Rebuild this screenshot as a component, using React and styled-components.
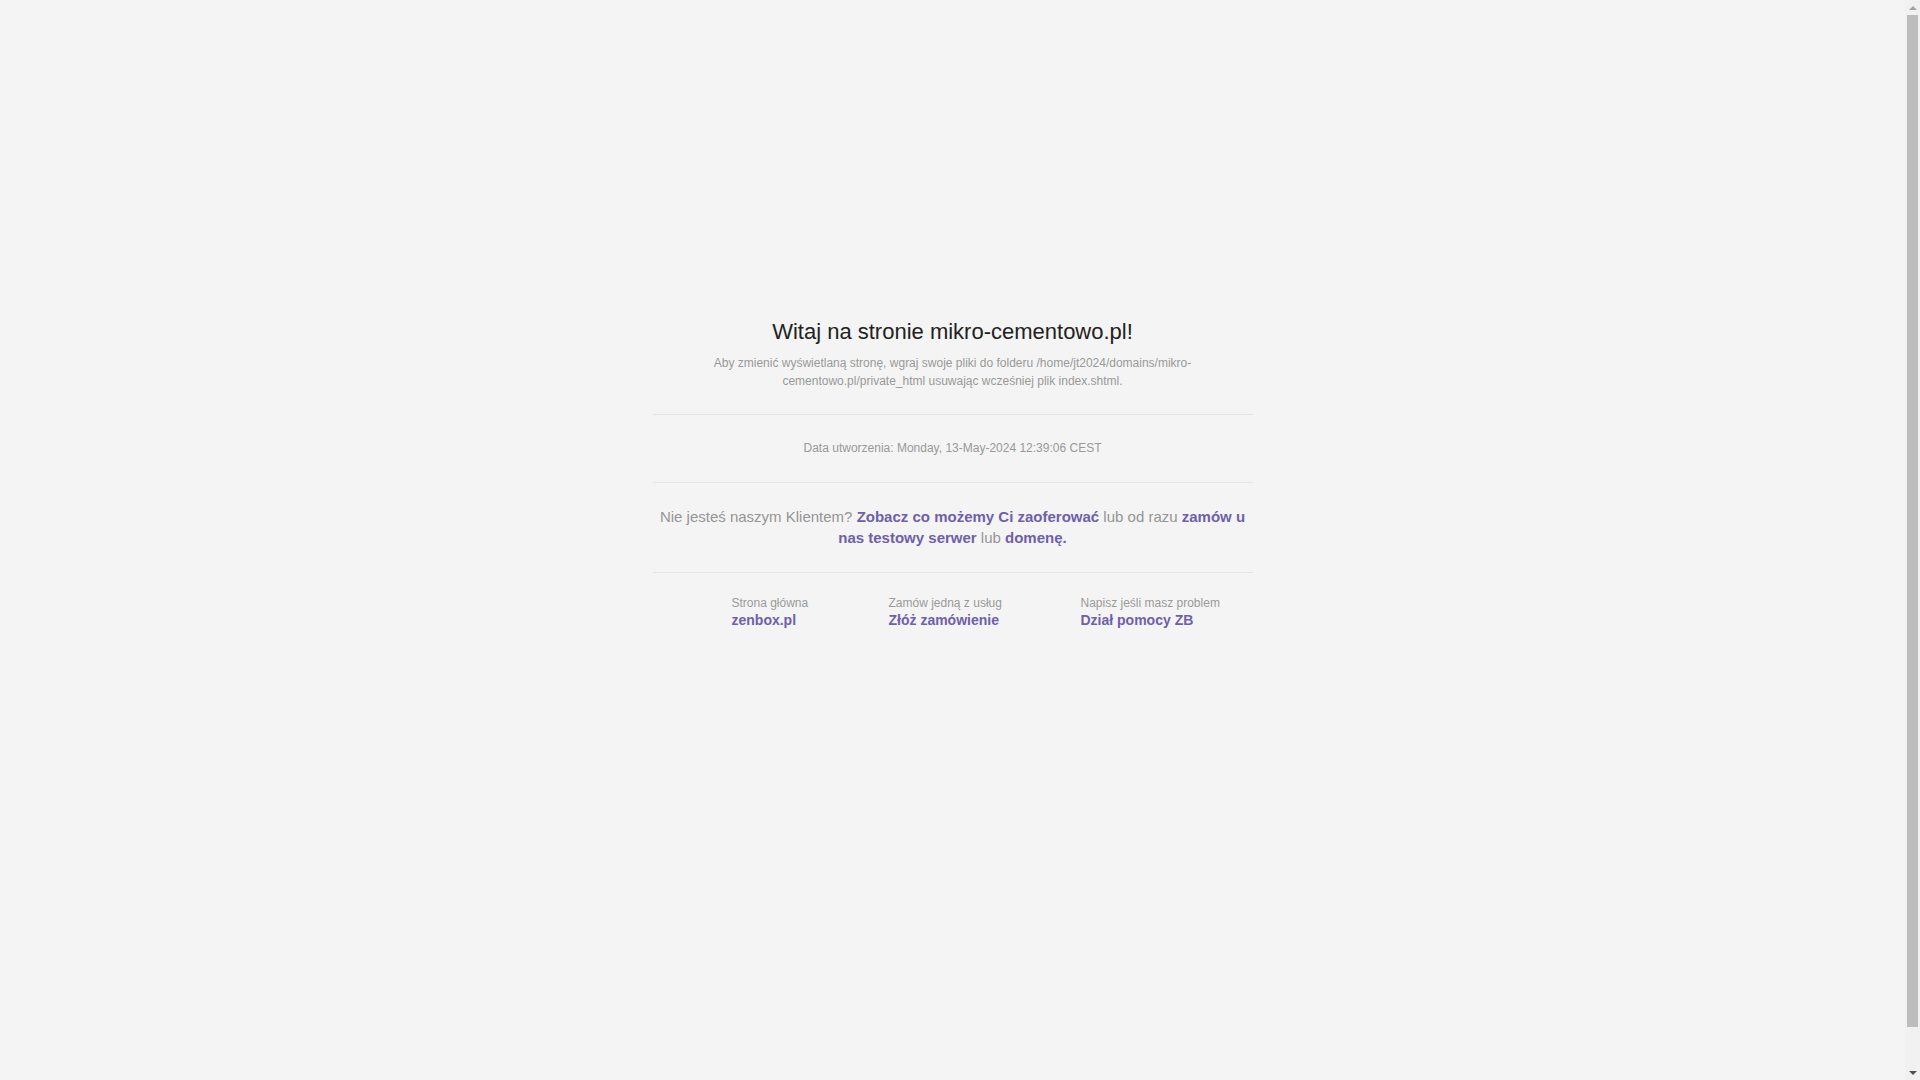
import styled, { createGlobalStyle } from 'styled-components';

const GlobalStyle = createGlobalStyle`
  html {
    background-color: #f4f4f4;
  }
  body {
    margin: 0;
    background-color: #f4f4f4;
    font-family: 'Liberation Sans', Arial, sans-serif;
  }
`;

const links = [
  { label: 'Strona główna', title: 'zenbox.pl' },
  { label: 'Zamów jedną z usług', title: 'Złóż zamówienie' },
  { label: 'Napisz jeśli masz problem', title: 'Dział pomocy ZB' },
];

const App = () => {
  return (
    <>
      <GlobalStyle />
      <Page>
        <Wrapper>
          <Header>
            <Title>Witaj na stronie mikro-cementowo.pl!</Title>
            <Lead>
              Aby zmienić wyświetlaną stronę, wgraj swoje pliki do folderu
              /home/jt2024/domains/mikro-cementowo.pl/private_html usuwając
              wcześniej plik index.shtml.
            </Lead>
          </Header>
          <DateSection>
            <DateText>
              Data utworzenia: Monday, 13-May-2024 12:39:06 CEST
            </DateText>
          </DateSection>
          <OfferSection>
            <OfferText>
              Nie jesteś naszym Klientem?{' '}
              <Strong href="#">Zobacz co możemy Ci zaoferować</Strong> lub od
              razu <Strong href="#">zamów u nas testowy serwer</Strong> lub{' '}
              <Strong href="#">domenę.</Strong>
            </OfferText>
          </OfferSection>
          <FooterLinks>
            {links.map((link, i) => (
              <FooterItem key={i}>
                <FooterLabel>{link.label}</FooterLabel>
                <FooterLink href="#">{link.title}</FooterLink>
              </FooterItem>
            ))}
          </FooterLinks>
        </Wrapper>
      </Page>
      <ScrollBar aria-hidden="true">
        <Arrow $up />
        <Thumb />
        <Arrow />
      </ScrollBar>
    </>
  );
};

export default App;

// right padding leaves room for the scrollbar strip
const Page = styled.main`
  min-height: 100vh;
  padding: 20px 15px 20px 0;
`;

const Wrapper = styled.div`
  width: 600px;
  margin: 299px auto 0 auto;
  text-align: center;
`;

const Header = styled.header`
  padding-bottom: 24px;
  border-bottom: 1px solid #e5e5e5;
`;

const Title = styled.h1`
  margin: 0;
  font-size: 22px;
  font-weight: normal;
  line-height: 26px;
  color: #222222;
`;

const Lead = styled.p`
  margin: 9px 0 0 0;
  font-size: 12px;
  line-height: 18px;
  color: #999999;
`;

const DateSection = styled.section`
  padding: 24px 0 25px 0;
  border-bottom: 1px solid #e5e5e5;
`;

const DateText = styled.p`
  margin: 0;
  font-size: 12px;
  line-height: 18px;
  color: #999999;
`;

const OfferSection = styled.section`
  padding: 23px 0 24px 0;
  border-bottom: 1px solid #e5e5e5;
`;

const OfferText = styled.p`
  margin: 0;
  font-size: 15px;
  line-height: 21px;
  color: #959595;
`;

const Strong = styled.a`
  font-weight: bold;
  color: #6e60ab;
  text-decoration: none;
`;

const FooterLinks = styled.nav`
  display: grid;
  grid-template-columns: 157px 192px auto;
  padding: 23px 0 0 79px;
  text-align: left;
`;

const FooterItem = styled.div`
  display: flex;
  flex-direction: column;
  gap: 1px;
`;

const FooterLabel = styled.span`
  font-size: 12px;
  line-height: 14px;
  color: #9a9a9a;
`;

const FooterLink = styled.a`
  font-size: 14px;
  line-height: 18px;
  font-weight: bold;
  color: #6e60ab;
  text-decoration: none;
`;

const ScrollBar = styled.div`
  position: fixed;
  top: 0;
  right: 0;
  width: 15px;
  height: 100vh;
  display: flex;
  flex-direction: column;
  align-items: center;
  background-color: #f1f1f1;
`;

const Arrow = styled.div`
  flex: 0 0 15px;
  width: 15px;
  display: flex;
  align-items: center;
  justify-content: center;

  &::before {
    content: '';
    width: 0;
    height: 0;
    border-left: 4px solid transparent;
    border-right: 4px solid transparent;
    ${(p) =>
      p.$up
        ? 'border-bottom: 4px solid #a3a3a3;'
        : 'border-top: 4px solid #505050;'}
  }
`;

const Thumb = styled.div`
  width: 11px;
  height: 1012px;
  margin-bottom: auto;
  background-color: #bdbdbd;
`;
